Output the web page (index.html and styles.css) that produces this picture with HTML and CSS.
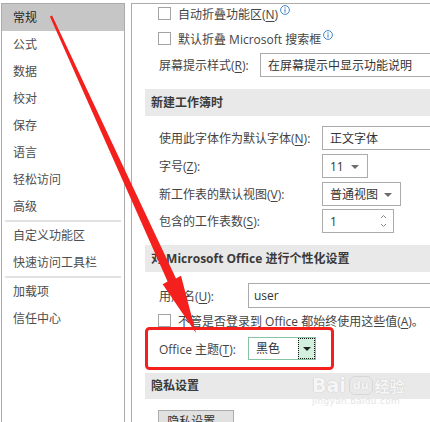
FILE: index.html
```html
<!DOCTYPE html>
<html lang="zh-CN">
<head>
  <meta charset="UTF-8" />
  <title>Excel 选项 - 常规</title>
  <link rel="stylesheet" href="styles.css">
</head>
<body>

<div class="window">
  <!-- left category list -->
  <div class="sidebar">
    <div class="nav-item active">常规</div>
    <div class="nav-item">公式</div>
    <div class="nav-item">数据</div>
    <div class="nav-item">校对</div>
    <div class="nav-item">保存</div>
    <div class="nav-item">语言</div>
    <div class="nav-item">轻松访问</div>
    <div class="nav-item">高级</div>
    <div class="nav-sep"></div>
    <div class="nav-item">自定义功能区</div>
    <div class="nav-item">快速访问工具栏</div>
    <div class="nav-sep"></div>
    <div class="nav-item">加载项</div>
    <div class="nav-item">信任中心</div>
  </div>

  <!-- right options panel -->
  <div class="content">
    <div class="check-row first">
      <span class="checkbox"></span>
      <span>自动折叠功能区(<u>N</u>)</span>
      <svg class="info" width="10" height="10" viewBox="0 0 10 10"><circle cx="5" cy="5" r="4.4" fill="none" stroke="#2f7bc4" stroke-width="0.9"/><circle cx="5" cy="2.9" r="0.7" fill="#2f7bc4"/><path d="M5 4.3V7.6" stroke="#2f7bc4" stroke-width="1"/></svg>
    </div>
    <div class="check-row">
      <span class="checkbox"></span>
      <span>默认折叠 Microsoft 搜索框</span>
      <svg class="info" width="10" height="10" viewBox="0 0 10 10"><circle cx="5" cy="5" r="4.4" fill="none" stroke="#2f7bc4" stroke-width="0.9"/><circle cx="5" cy="2.9" r="0.7" fill="#2f7bc4"/><path d="M5 4.3V7.6" stroke="#2f7bc4" stroke-width="1"/></svg>
    </div>
    <div class="form-row tip-row">
      <span class="label w-tip">屏幕提示样式(<u>R</u>):</span>
      <div class="select wide">在屏幕提示中显示功能说明</div>
    </div>

    <div class="section">新建工作簿时</div>
    <div class="form-row gap-top">
      <span class="label w-book">使用此字体作为默认字体(<u>N</u>):</span>
      <div class="select wide">正文字体</div>
    </div>
    <div class="form-row">
      <span class="label w-book">字号(<u>Z</u>):</span>
      <div class="select size-box">11<span class="arrow"></span></div>
    </div>
    <div class="form-row">
      <span class="label w-book">新工作表的默认视图(<u>V</u>):</span>
      <div class="select view-box">普通视图<span class="arrow"></span></div>
    </div>
    <div class="form-row sheets-row">
      <span class="label w-book">包含的工作表数(<u>S</u>):</span>
      <div class="select spin-box">1
        <span class="spin">
          <svg width="7" height="16" viewBox="0 0 7 16"><path d="M1 5L3.5 2.5L6 5M1 11L3.5 13.5L6 11" fill="none" stroke="#8a8a8a" stroke-width="1"/></svg>
        </span>
      </div>
    </div>

    <div class="section">对 Microsoft Office 进行个性化设置</div>
    <div class="form-row user-row">
      <span class="label w-user">用户名(<u>U</u>):</span>
      <div class="select input-box">user</div>
    </div>
    <div class="check-row">
      <span class="checkbox"></span>
      <span>不管是否登录到 Office 都始终使用这些值(<u>A</u>)。</span>
    </div>
    <div class="form-row theme-row">
      <span class="label w-user">Office 主题(<u>T</u>):</span>
      <div class="theme-select">
        <span class="theme-value">黑色</span>
        <span class="theme-drop"><span class="arrow dark"></span></span>
      </div>
    </div>

    <div class="section privacy">隐私设置</div>
    <div class="button">隐私设置...</div>
  </div>
</div>

<!-- annotation drawn over the screenshot -->
<svg class="annotation" width="430" height="422" viewBox="0 0 430 422">
  <polygon points="52.1,15.5 176,278.5 181,275.8 196,333 162.7,284.2 167.6,281.5 49.9,16.5" fill="#f3201d"/>
  <rect x="146.5" y="328.5" width="186" height="40" rx="3" fill="none" stroke="#f3201d" stroke-width="3"/>
</svg>

<div class="watermark">
  <div class="wm-logo"><span class="wm-bai">Bai</span><span class="wm-paw">du</span><span class="wm-jy">经验</span></div>
  <div class="wm-url">jingyan.baidu.com</div>
</div>

</body>
</html>
```

FILE: styles.css
```css
body {
  margin: 0;
  width: 430px;
  height: 422px;
  overflow: hidden;
  background: #fff;
  font-family: "Open Sans", "Noto Sans CJK SC", sans-serif;
  font-size: 12px;
  color: #444;
  position: relative;
}

u {
  text-decoration: underline;
  text-underline-offset: 2px;
}

.window {
  display: flex;
  gap: 6px;
  padding: 3px 0 0 1px;
  height: 422px;
  box-sizing: border-box;
}

/* left list */
.sidebar {
  width: 122px;
  flex: none;
  border: 1px solid #ababab;
  border-bottom: none;
}

.nav-item {
  height: 27px;
  line-height: 27px;
  padding-left: 11px;
  color: #4d4d4d;
  white-space: nowrap;
}

.nav-item.active {
  background: #c6c6c6;
  color: #262626;
}

.nav-sep {
  height: 2px;
  margin: 0 3px;
  background: #e2e2e2;
}

/* right panel */
.content {
  flex: 1;
  border-left: 1px solid #ababab;
  border-top: 1px solid #ababab;
  padding-left: 13px;
  white-space: nowrap;
  overflow: hidden;
}

.check-row {
  display: flex;
  align-items: center;
  height: 25px;
  padding-left: 13px;
}

.check-row.first {
  margin-top: -3px;
}

.checkbox {
  width: 11px;
  height: 11px;
  border: 1px solid #a3a3a3;
  background: #fff;
  margin-right: 7px;
  flex: none;
}

.info {
  margin-left: 2px;
  margin-top: -8px;
}

.form-row {
  display: flex;
  align-items: center;
  height: 24px;
  margin-top: 4px;
  padding-left: 14px;
}

.tip-row { margin-top: 2px; }
.form-row.gap-top { margin-top: 10px; }
.sheets-row { margin-top: 3px; }
.user-row { margin-top: 11px; height: 25px; }
.theme-row { margin-top: 4px; height: 23px; }

.label { flex: none; }
.w-tip { width: 101px; }
.w-book { width: 163px; }
.w-user { width: 89px; }

.select {
  box-sizing: border-box;
  height: 100%;
  border: 1px solid #ababab;
  background: #fff;
  padding-left: 7px;
  display: flex;
  align-items: center;
  color: #333;
  position: relative;
  flex: none;
}

.select.wide { width: 220px; }
.size-box { width: 46px; }
.view-box { width: 79px; }
.spin-box { width: 72px; }
.input-box { width: 220px; padding-left: 5px; }

.arrow {
  position: absolute;
  right: 8px;
  top: 10px;
  border-left: 4px solid transparent;
  border-right: 4px solid transparent;
  border-top: 4px solid #6c6c6c;
}

.arrow.dark {
  position: static;
  border-top-color: #222;
}

.spin {
  position: absolute;
  right: 6px;
  top: 3px;
  display: flex;
}

.theme-select {
  display: flex;
  box-sizing: border-box;
  width: 68px;
  height: 23px;
  border: 1px solid #86c3a2;
  background: #fff;
}

.theme-value {
  flex: 1;
  padding-left: 7px;
  line-height: 21px;
  color: #333;
}

.theme-drop {
  width: 17px;
  flex: none;
  background: #d3f0df;
  border: 1px dotted #111;
  box-sizing: border-box;
  display: flex;
  align-items: center;
  justify-content: center;
}

.section {
  margin-top: 12px;
  height: 27px;
  line-height: 27px;
  background: #e9e9e9;
  padding-left: 6px;
  font-weight: bold;
  color: #3a3a3a;
}

.section.privacy {
  margin-top: 13px;
  height: 26px;
  line-height: 26px;
}

.button {
  margin: 11px 0 0 13px;
  width: 76px;
  height: 24px;
  box-sizing: border-box;
  border: 1px solid #adadad;
  background: #e1e1e1;
  text-align: center;
  line-height: 22px;
  color: #333;
}

/* overlay */
.annotation {
  position: absolute;
  left: 0;
  top: 0;
  pointer-events: none;
}

.watermark {
  position: absolute;
  left: 312px;
  top: 374px;
  font-family: "DejaVu Sans", sans-serif;
  pointer-events: none;
}

.wm-logo {
  display: flex;
  align-items: center;
  color: rgba(255, 255, 255, 0.85);
  text-shadow: 0 0 1px #c9c9c9, 0 0 1px #c9c9c9;
}

.wm-bai {
  font-size: 19px;
  font-weight: bold;
}

.wm-paw {
  margin-left: 3px;
  font-size: 11px;
  font-weight: bold;
  padding: 2px 3px;
  border-radius: 6px;
  border: 1px solid rgba(210, 210, 210, 0.8);
}

.wm-jy {
  margin-left: 2px;
  font-family: "Noto Sans CJK SC", sans-serif;
  font-size: 15px;
  font-weight: bold;
}

.wm-url {
  font-size: 9px;
  color: #e4e4e4;
  letter-spacing: 0.3px;
}
```
